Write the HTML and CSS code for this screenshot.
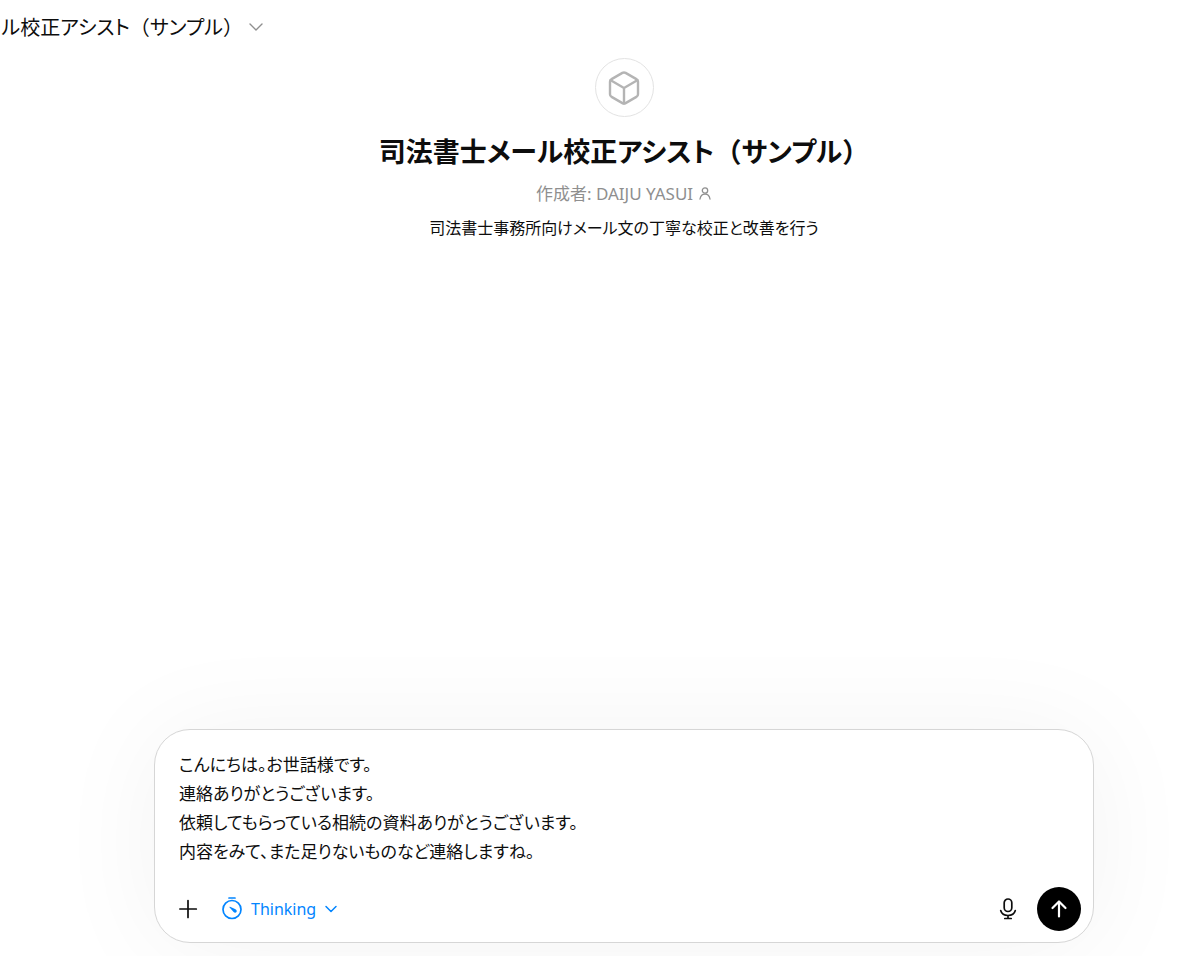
FILE: index.html
```html
<!DOCTYPE html>
<html lang="ja">
<head>
    <meta charset="UTF-8">
    <meta name="viewport" content="width=device-width, initial-scale=1.0">
    <title>司法書士メール校正アシスト（サンプル）</title>
    <link rel="stylesheet" href="styles.css">
</head>
<body>
    <header class="top-bar">
        <button class="model-menu" type="button">
            <span>司法書士メール校正アシスト<span class="paren">（</span>サンプル<span class="paren">）</span></span>
            <svg class="model-chevron" viewBox="0 0 14 14" aria-hidden="true">
                <path d="M1 5l6 6 6-6"/>
            </svg>
        </button>
    </header>

    <main class="chat">
        <section class="intro">
            <div class="avatar">
                <svg viewBox="0 0 32 36" aria-hidden="true">
                    <path d="M14.4 2.9 3.6 9.1a3 3 0 0 0-1.6 2.7v12.4a3 3 0 0 0 1.6 2.7l10.8 6.2a3.2 3.2 0 0 0 3.2 0l10.8-6.2a3 3 0 0 0 1.6-2.7V11.8a3 3 0 0 0-1.6-2.7L17.6 2.9a3.2 3.2 0 0 0-3.2 0Z"/>
                    <path d="M2.7 10.3 16 18l13.3-7.7M16 18v15.3"/>
                </svg>
            </div>
            <h1 class="title">司法書士メール校正アシスト<span class="paren">（</span>サンプル<span class="paren">）</span></h1>
            <div class="author">
                <span>作成者: DAIJU YASUI</span>
                <svg viewBox="0 0 14 14" aria-hidden="true">
                    <circle cx="7" cy="3.5" r="2.7"/>
                    <path d="M2 12c.6-3.400 2.400-4.900 5-4.900s4.400 1.500 5 4.900"/>
                </svg>
            </div>
            <p class="description">司法書士事務所向けメール文の丁寧な校正と改善を行う</p>
        </section>

        <form class="composer">
            <textarea class="message" rows="4" aria-label="メッセージ">こんにちは。お世話様です。
連絡ありがとうございます。
依頼してもらっている相続の資料ありがとうございます。
内容をみて、また足りないものなど連絡しますね。</textarea>
            <div class="toolbar">
                <button class="icon-btn" type="button" aria-label="追加">
                    <svg viewBox="0 0 22 22" aria-hidden="true">
                        <path d="M9 2.500v17M.8 11h16.500"/>
                    </svg>
                </button>
                <button class="thinking-btn" type="button">
                    <svg class="timer" viewBox="0 0 22 24" aria-hidden="true">
                        <circle cx="11" cy="12.500" r="9"/>
                        <path d="M8 1h6"/>
                        <path class="hand" d="M8.600 10.400c-.4-.3-.1-.8.4-.7l5 2.400c1.900 1 2 2 1.500 2.800-.6.900-1.900 1-2.900.2Z"/>
                    </svg>
                    <span>Thinking</span>
                    <svg class="thinking-chevron" viewBox="0 0 14 14" aria-hidden="true">
                        <path d="M2 4.500l5 5 5-5"/>
                    </svg>
                </button>
                <button class="icon-btn mic-btn" type="button" aria-label="音声入力">
                    <svg viewBox="0 0 22 22" aria-hidden="true">
                        <rect x="7.200" y="1" width="7.600" height="12.500" rx="3.800"/>
                        <path d="M3.700 12.500c.9 3.200 3.700 5 7.300 5s6.400-1.800 7.300-5M11 17.500v3M7.800 20.500h6.400"/>
                    </svg>
                </button>
                <button class="send-btn" type="submit" aria-label="送信">
                    <svg viewBox="0 0 22 22" aria-hidden="true">
                        <path d="M11 18.500V3.500M4.500 10 11 3.500l6.500 6.500"/>
                    </svg>
                </button>
            </div>
        </form>
    </main>
</body>
</html>
```

FILE: styles.css
```css
* {
    margin: 0;
    padding: 0;
    box-sizing: border-box;
}

body {
    background-color: #fff;
    color: #0d0d0d;
    min-height: 100vh;
    display: flex;
    flex-direction: column;
    overflow-x: hidden;
    font-family: "Noto Sans", "Noto Sans CJK JP", sans-serif;
    font-feature-settings: "palt";
}

button,
textarea {
    border: none;
    background: none;
    color: inherit;
    font: inherit;
    font-feature-settings: inherit;
}

button {
    cursor: pointer;
}

svg {
    display: block;
    flex: none;
    fill: none;
    stroke: currentColor;
    stroke-linecap: round;
    stroke-linejoin: round;
}

/* brackets keep their full width beside the proportional kana */
.paren {
    font-feature-settings: normal;
}

.top-bar {
    display: flex;
    justify-content: flex-end;
    width: 263px;
    height: 54px;
    padding-bottom: 2px;
}

.model-menu {
    display: flex;
    align-items: center;
    gap: 6px;
    font-size: 20px;
    white-space: nowrap;
}

.model-chevron {
    width: 14px;
    height: 14px;
    color: #8f8f8f;
    stroke-width: 1.4;
}

.chat {
    flex: 1;
    display: flex;
    flex-direction: column;
    justify-content: space-between;
    padding: 4px 0 13px 48px;
}

.intro {
    display: flex;
    flex-direction: column;
    align-items: center;
    text-align: center;
}

.avatar {
    display: flex;
    align-items: center;
    justify-content: center;
    width: 59px;
    height: 59px;
    border: 1px solid #e3e3e3;
    border-radius: 50%;
    color: #b4b4b4;
}

.avatar svg {
    width: 32px;
    height: 36px;
    stroke-width: 2.4;
}

.title {
    margin-top: 16px;
    font-size: 27px;
    line-height: 38px;
    font-weight: 600;
}

.author {
    display: flex;
    align-items: center;
    gap: 5px;
    margin-top: 10px;
    color: #8f8f8f;
    font-size: 17px;
    line-height: 26px;
}

.author svg {
    width: 14px;
    height: 14px;
    stroke-width: 1.3;
}

.description {
    margin-top: 8px;
    font-size: 16px;
    line-height: 26px;
}

.composer {
    width: calc(100% - 64px);
    max-width: 940px;
    margin: 0 auto;
    padding: 20px 12px 11px 24px;
    background-color: #fff;
    border: 1px solid #d6d6d6;
    border-radius: 36px;
    box-shadow: 0 4px 110px rgba(0, 0, 0, 0.05);
}

.message {
    display: block;
    width: 100%;
    resize: none;
    outline: none;
    overflow: hidden;
    font-size: 17px;
    line-height: 29px;
}

.toolbar {
    display: flex;
    align-items: center;
    margin-top: 21px;
}

.icon-btn svg,
.send-btn svg {
    width: 22px;
    height: 22px;
    stroke-width: 1.7;
}

.thinking-btn {
    display: flex;
    align-items: center;
    gap: 8px;
    margin-left: 20px;
    color: #0285ff;
    font-size: 16px;
}

.timer {
    width: 22px;
    height: 24px;
    stroke-width: 1.7;
}

.timer .hand {
    fill: currentColor;
    stroke: none;
}

.thinking-chevron {
    width: 14px;
    height: 14px;
    stroke-width: 1.5;
}

.mic-btn {
    margin-left: auto;
}

.send-btn {
    display: flex;
    align-items: center;
    justify-content: center;
    width: 44px;
    height: 44px;
    margin-left: 18px;
    border-radius: 50%;
    background-color: #000;
    color: #fff;
}

.send-btn svg {
    stroke-width: 2.2;
}
```
